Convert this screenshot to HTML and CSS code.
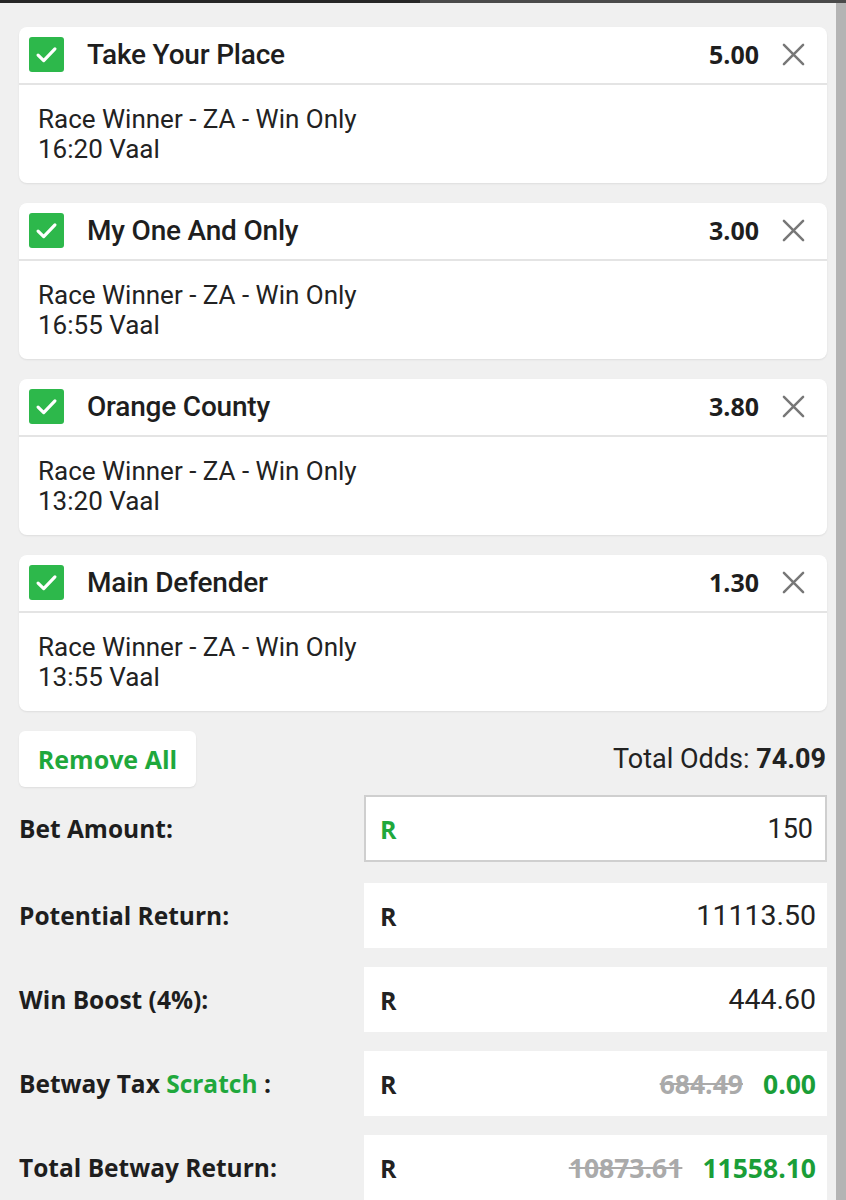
FILE: index.html
```html
<!DOCTYPE html>
<html>
<head>
<meta charset="utf-8">
<link rel="stylesheet" href="styles.css">
</head>
<body>
<div class="topbar"><div class="tb-left"></div><div class="tb-right"></div></div>
<div class="page">
  <main class="main">
    <div class="card">
      <div class="card-head">
        <span class="check"><svg viewBox="0 0 24 24" width="24" height="24"><path d="M4.5 12.5l5 5L19.5 7" fill="none" stroke="#fff" stroke-width="2.8" stroke-linecap="round" stroke-linejoin="round"/></svg></span>
        <span class="title">Take Your Place</span>
        <span class="odds">5.00</span>
        <span class="close"><svg viewBox="0 0 24 24" width="24" height="24"><path d="M2 2L22 22M22 2L2 22" stroke="#777" stroke-width="2.6" stroke-linecap="round"/></svg></span>
      </div>
      <div class="card-body">
        <div>Race Winner - ZA - Win Only</div>
        <div>16:20 Vaal</div>
      </div>
    </div>
    <div class="card">
      <div class="card-head">
        <span class="check"><svg viewBox="0 0 24 24" width="24" height="24"><path d="M4.5 12.5l5 5L19.5 7" fill="none" stroke="#fff" stroke-width="2.8" stroke-linecap="round" stroke-linejoin="round"/></svg></span>
        <span class="title">My One And Only</span>
        <span class="odds">3.00</span>
        <span class="close"><svg viewBox="0 0 24 24" width="24" height="24"><path d="M2 2L22 22M22 2L2 22" stroke="#777" stroke-width="2.6" stroke-linecap="round"/></svg></span>
      </div>
      <div class="card-body">
        <div>Race Winner - ZA - Win Only</div>
        <div>16:55 Vaal</div>
      </div>
    </div>
    <div class="card">
      <div class="card-head">
        <span class="check"><svg viewBox="0 0 24 24" width="24" height="24"><path d="M4.5 12.5l5 5L19.5 7" fill="none" stroke="#fff" stroke-width="2.8" stroke-linecap="round" stroke-linejoin="round"/></svg></span>
        <span class="title">Orange County</span>
        <span class="odds">3.80</span>
        <span class="close"><svg viewBox="0 0 24 24" width="24" height="24"><path d="M2 2L22 22M22 2L2 22" stroke="#777" stroke-width="2.6" stroke-linecap="round"/></svg></span>
      </div>
      <div class="card-body">
        <div>Race Winner - ZA - Win Only</div>
        <div>13:20 Vaal</div>
      </div>
    </div>
    <div class="card">
      <div class="card-head">
        <span class="check"><svg viewBox="0 0 24 24" width="24" height="24"><path d="M4.5 12.5l5 5L19.5 7" fill="none" stroke="#fff" stroke-width="2.8" stroke-linecap="round" stroke-linejoin="round"/></svg></span>
        <span class="title">Main Defender</span>
        <span class="odds">1.30</span>
        <span class="close"><svg viewBox="0 0 24 24" width="24" height="24"><path d="M2 2L22 22M22 2L2 22" stroke="#777" stroke-width="2.6" stroke-linecap="round"/></svg></span>
      </div>
      <div class="card-body">
        <div>Race Winner - ZA - Win Only</div>
        <div>13:55 Vaal</div>
      </div>
    </div>

    <div class="actions">
      <button class="remove">Remove All</button>
      <div class="total-odds">Total Odds: <b>74.09</b></div>
    </div>

    <div class="row row-first">
      <div class="label">Bet Amount:</div>
      <div class="box input"><span class="cur green">R</span><span class="val">150</span></div>
    </div>
    <div class="row row-second">
      <div class="label">Potential Return:</div>
      <div class="box"><span class="cur">R</span><span class="val">11113.50</span></div>
    </div>
    <div class="row">
      <div class="label">Win Boost (4%):</div>
      <div class="box"><span class="cur">R</span><span class="val">444.60</span></div>
    </div>
    <div class="row">
      <div class="label">Betway Tax <span class="green">Scratch</span> :</div>
      <div class="box"><span class="cur">R</span><span class="val"><s class="old">684.49</s><span class="new">0.00</span></span></div>
    </div>
    <div class="row">
      <div class="label">Total Betway Return:</div>
      <div class="box"><span class="cur">R</span><span class="val"><s class="old">10873.61</s><span class="new">11558.10</span></span></div>
    </div>
  </main>
  <div class="scrollbar"></div>
</div>
</body>
</html>
```
FILE: styles.css
```css
* { box-sizing: border-box; }
html, body { margin: 0; padding: 0; }
body {
  background: #f0f0f0;
  font-family: Roboto, "Liberation Sans", sans-serif;
  color: #222;
  width: 846px;
  height: 1200px;
  overflow: hidden;
}
.topbar { display: flex; height: 3px; }
.tb-left { width: 420px; background: #262626; }
.tb-right { flex: 1; background: #4a4a4a; }
.page { display: flex; }
.main {
  width: 836px;
  padding: 24px 9px 0 19px;
  display: flex;
  flex-direction: column;
}
.scrollbar { width: 10px; height: 1197px; background: #b4b4b4; }

.card {
  background: #fff;
  border-radius: 8px;
  box-shadow: 0 1px 2px rgba(0,0,0,0.08);
  margin-bottom: 20px;
}
.card-head {
  height: 58px;
  display: flex;
  align-items: center;
  padding: 0 22px 2px 10px;
  border-bottom: 2px solid #e4e4e4;
}
.check {
  width: 35px; height: 35px;
  background: #2db84b;
  border-radius: 3px;
  display: flex; align-items: center; justify-content: center;
}
.check svg { width: 27px; height: 27px; }
.title {
  margin-left: 23px;
  font-size: 28px;
  font-weight: 500;
  color: #1e1e1e;
  flex: 1;
  letter-spacing: -0.2px;
}
.odds {
  font-family: "Open Sans", Roboto, sans-serif;
  font-size: 25px;
  font-weight: 700;
  color: #1e1e1e;
  margin-right: 23px;
}
.close { width: 23px; height: 23px; display: flex; }
.close svg { width: 23px; height: 23px; }
.card-body {
  height: 98px;
  padding: 19px 20px 0 19px;
  font-size: 26px;
  line-height: 30px;
  color: #222;
}

.actions {
  display: flex;
  justify-content: space-between;
  align-items: center;
  margin-bottom: 8px;
}
.remove {
  width: 177px; height: 56px;
  background: #fff;
  border: none;
  border-radius: 6px;
  box-shadow: 0 1px 2px rgba(0,0,0,0.08);
  color: #1fa83c;
  font-family: "Open Sans", Roboto, sans-serif;
  font-size: 25px;
  font-weight: 700;
  padding: 0;
}
.total-odds { font-size: 27px; color: #222; margin-right: 1px; }
.total-odds b { font-weight: 700; }

.row {
  display: flex;
  align-items: center;
  margin-top: 19px;
}
.row-first { margin-top: 0; }
.row-second { margin-top: 21px; }
.label {
  width: 345px;
  font-family: "Open Sans", Roboto, sans-serif;
  font-size: 24.5px;
  font-weight: 700;
  color: #1e1e1e;
}
.green { color: #1fa83c; }
.box {
  flex: 1;
  height: 65px;
  background: #fff;
  display: flex;
  align-items: center;
  justify-content: space-between;
  padding: 0 11px 0 16px;
}
.box.input { height: 67px; border: 2px solid #cfcfcf; padding-left: 14px; padding-right: 12px; }
.box.input .val { font-size: 27px; }
.cur { font-family: "Open Sans", Roboto, sans-serif; font-size: 25px; font-weight: 700; color: #222; }
.cur.green { color: #1fa83c; }
.val { font-size: 28.5px; color: #222; }
.old { font-family: "Open Sans", Roboto, sans-serif; color: #aaa; font-weight: 700; font-size: 26.5px; margin-right: 20px; }
.new { font-family: "Open Sans", Roboto, sans-serif; color: #1a9e38; font-weight: 700; font-size: 26.5px; }
```
